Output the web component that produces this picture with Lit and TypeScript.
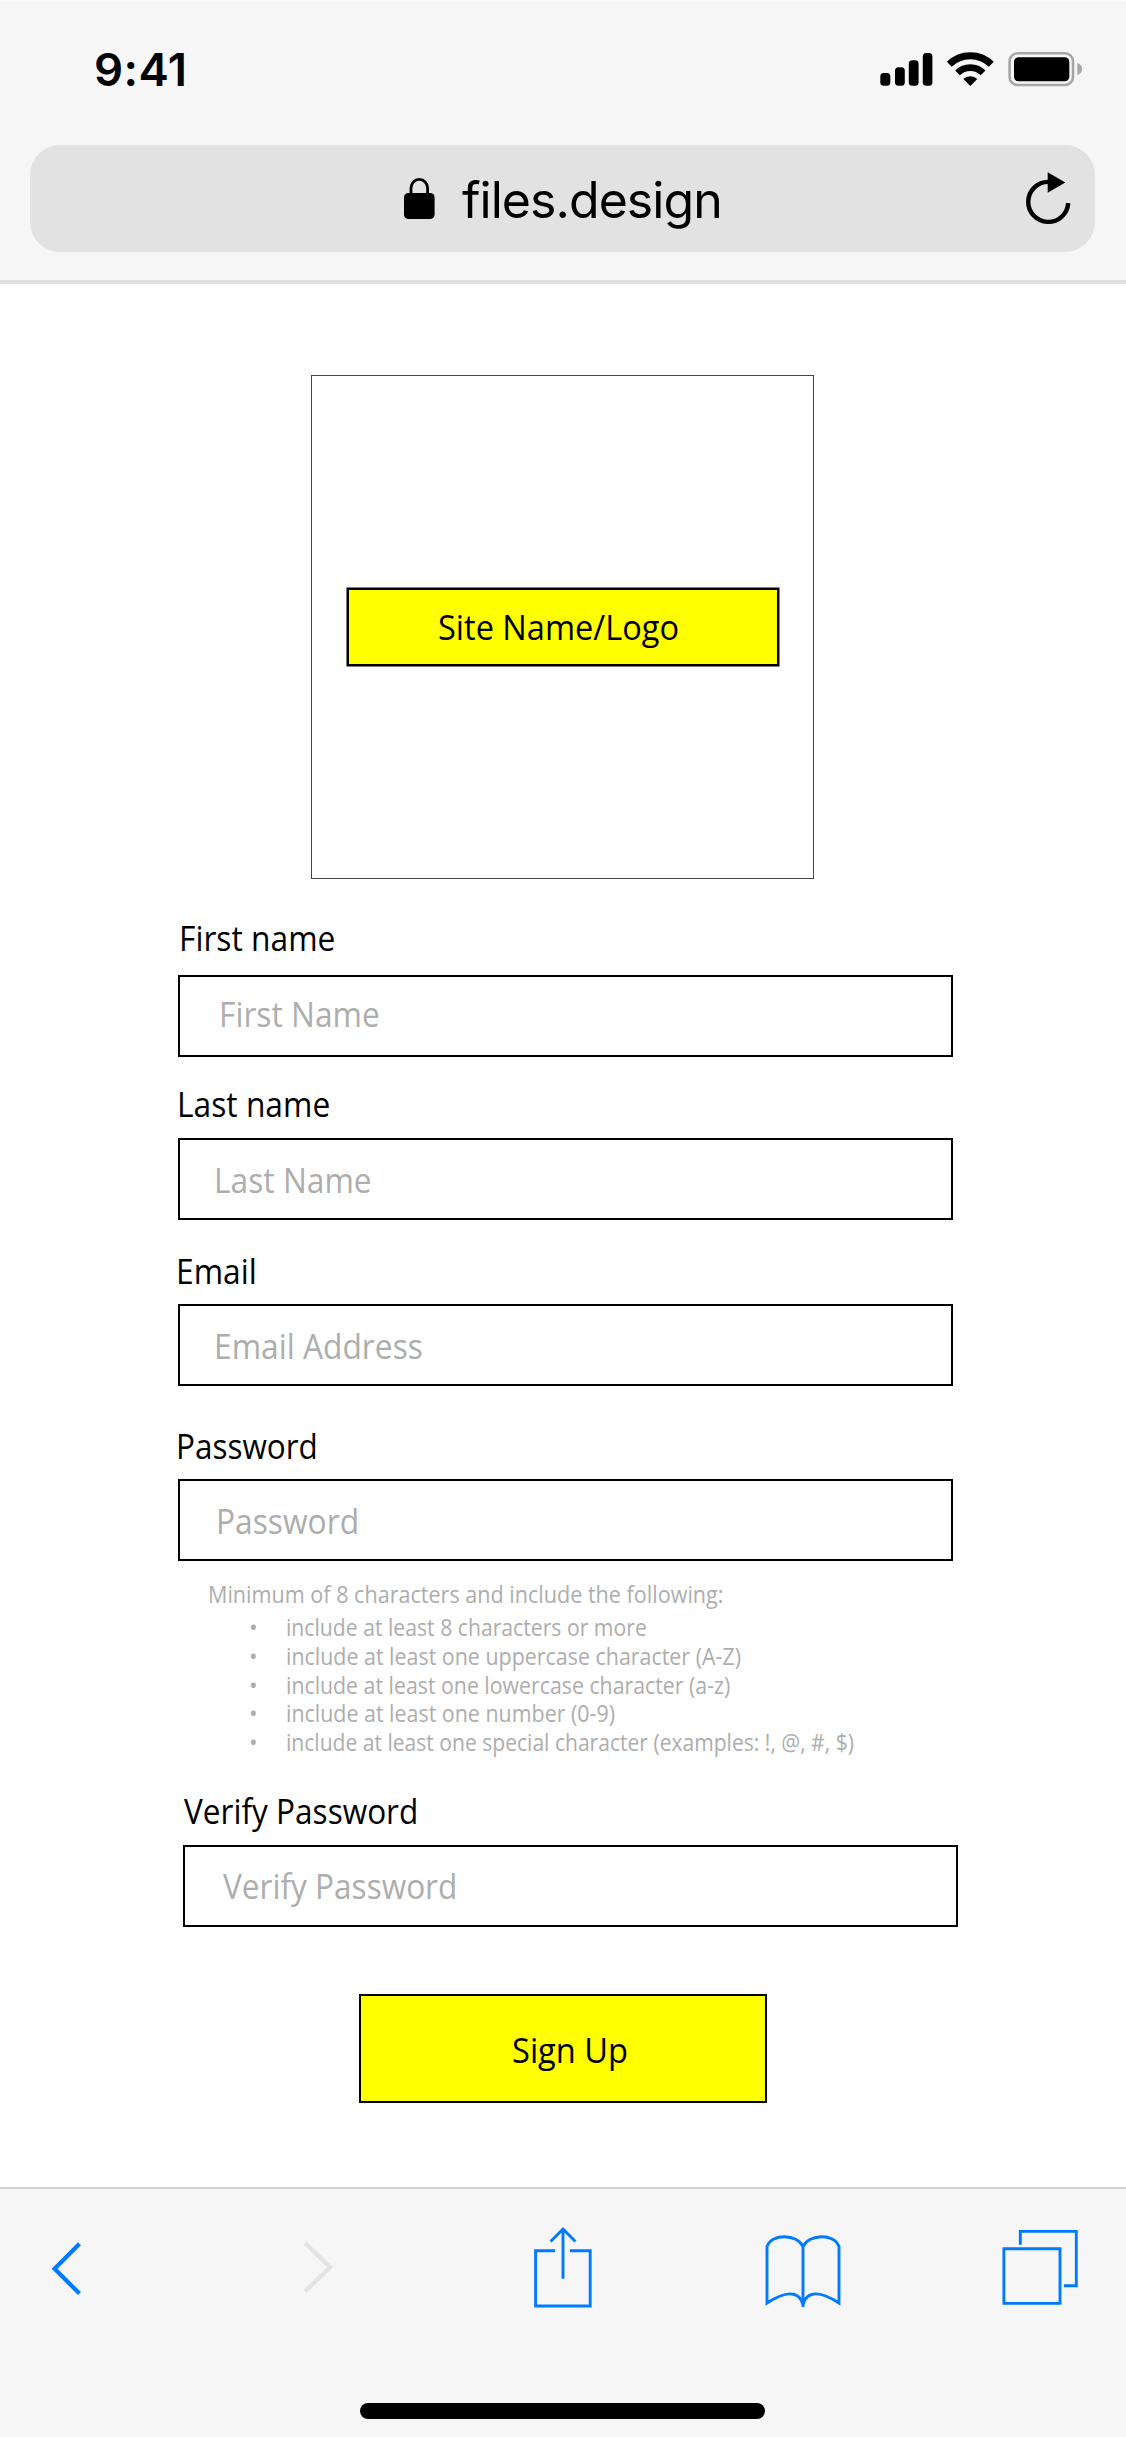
import { LitElement, html, css } from "lit";
import { customElement } from "lit/decorators.js";

interface Field { cls: string; label: string; placeholder: string; type: string; }

const FIELDS: Field[] = [
  { cls: "first", label: "First name", placeholder: "First Name", type: "text" },
  { cls: "last", label: "Last name", placeholder: "Last Name", type: "text" },
  { cls: "email", label: "Email", placeholder: "Email Address", type: "email" },
  { cls: "password", label: "Password", placeholder: "Password", type: "password" },
];

const VERIFY: Field = { cls: "verify", label: "Verify Password", placeholder: "Verify Password", type: "password" };

const RULES = [
  "include at least 8 characters or more",
  "include at least one uppercase character (A-Z)",
  "include at least one lowercase character (a-z)",
  "include at least one number (0-9)",
  "include at least one special character (examples: !, @, #, $)",
];

@customElement("app-root")
export class AppRoot extends LitElement {
  static styles = css`
    :host { display: block; }
    * { box-sizing: border-box; margin: 0; }
    .page { width: 1126px; height: 2437px; background: #fff; display: flex; flex-direction: column;
      font-family: "Open Sans", "Noto Sans", sans-serif; font-size: 34.5px; line-height: 40px; color: #000; overflow: hidden; }
    svg { display: block; flex: none; }

    .top { height: 284px; flex: none; background: #f6f6f6; border-top: 1px solid #fdfdfd; border-bottom: 4px solid #e0e0e0;
      font-family: Inter, "Liberation Sans", sans-serif; }
    .status { height: 144px; display: flex; justify-content: space-between; padding: 42px 44px 0 94px; }
    .time { font-size: 45.5px; font-weight: 600; line-height: 53px; letter-spacing: 0.4px; }
    .address { height: 107px; margin: 0 31px 0 30px; border-radius: 30px; background: #e2e2e2; display: flex; align-items: center; padding: 0 23px 0 373px; }
    .url { font-size: 50px; line-height: 60px; letter-spacing: -0.95px; margin-left: 26px; padding-top: 2px; }
    .reload { margin-left: auto; }

    main { height: 1903px; flex: none; display: flex; flex-direction: column; }
    .fit { display: inline-block; white-space: nowrap; transform: scaleX(0.92); transform-origin: left center; }
    .logo { width: 503px; height: 504px; margin: 91px 0 0 311px; border: 1px solid #444; display: flex; align-items: center; justify-content: center; }
    .name { width: 432px; height: 78px; background: #ff0; border: 2px solid #000; box-shadow: 0 0 0 0.5px #000; padding: 17px 0 0 89px; }
    .name .fit { transform: scaleX(0.943); }

    .field { display: flex; flex-direction: column; align-items: flex-start; margin-left: 178px; }
    label { display: block; height: 53px; margin-left: -2px; }
    .box { width: 775px; height: 82px; border: 2px solid #000; padding-left: 34px; display: flex; align-items: center; }
    input { width: 760px; height: 60px; flex: none; border: 0; padding: 0; background: transparent; outline: none; font: inherit; color: #000;
      transform: scaleX(0.92); transform-origin: left center; }
    input::placeholder { color: #adadad; opacity: 1; }
    .first { margin-top: 39px; }
    .first label { height: 57px; margin-left: 1px; }
    .first .box { padding: 0 0 5px 39px; }
    .last { margin-top: 27px; }
    .last label { height: 54px; margin-left: -1px; }
    .email { margin-top: 31px; }
    .password { margin-top: 40px; }
    .password label .fit { transform: scaleX(0.912); }
    .password .box { padding-left: 36px; }
    .verify { margin: 21px 0 0 183px; }
    .verify label { height: 54px; margin-left: 1px; }
    .verify label .fit { transform: scaleX(0.915); }
    .verify .box { padding: 0 0 2px 38px; }
    .verify input { transform: scaleX(0.915); }

    .hint { margin: 19px 0 0 208px; font-size: 23px; line-height: 28.75px; color: #adadad; height: 190px; }
    .hint p { height: 29px; }
    .hint p .fit { transform: scaleX(0.938); }
    ul { list-style: none; padding: 4px 0 0; }
    li { display: flex; }
    li::before { content: "•"; width: 37px; margin-left: 41px; }
    li .fit { transform: scaleX(0.926); }
    li:nth-child(1) .fit { transform: scaleX(0.921); }
    li:nth-child(2) .fit, li:nth-child(4) .fit { transform: scaleX(0.931); }
    li:last-child .fit { transform: scaleX(0.916); }

    button { width: 408px; height: 109px; margin: 67px 0 0 359px; background: #ff0; border: 2px solid #000; border-radius: 0; font: inherit; color: #000; text-align: left; padding: 2px 0 0 151px; }
    button .fit { transform: scaleX(0.945); }

    .bottom { height: 250px; flex: none; background: #f6f6f6; border-top: 2px solid #d1d1d1; display: flex; flex-direction: column; }
    .tools { display: flex; padding: 36px 0 0 50px; fill: none; stroke: #007aff; stroke-width: 2.9; }
    .chev { stroke-width: 4.2; }
    .off { stroke: #e3e3e3; margin-left: 218px; }
    .share { margin-left: 197px; }
    .book { margin-left: 172px; }
    .tabs { margin-left: 160px; }
    .home { width: 405px; height: 16px; border-radius: 8px; background: #000; margin: 88px 0 0 360px; }
  `;

  private field(f: Field) {
    return html`<div class="field ${f.cls}">
      <label for=${f.cls}><span class="fit">${f.label}</span></label>
      <div class="box"><input id=${f.cls} type=${f.type} placeholder=${f.placeholder}></div>
    </div>`;
  }

  render() {
    return html`<div class="page">
      <header class="top">
        <div class="status">
          <span class="time">9:41</span>
          <svg width="204" height="50" viewBox="878 43 204 50">
            <rect x="880.3" y="73" width="10" height="12.7" rx="3.5"/>
            <rect x="895" y="67.3" width="9.8" height="18.4" rx="3.5"/>
            <rect x="908.8" y="60.3" width="9.8" height="25.4" rx="3.5"/>
            <rect x="922.8" y="53" width="9.6" height="32.7" rx="3.5"/>
            <path d="M949.3 64.3A30.2 30.2 0 0 1 991.3 64.3" fill="none" stroke="#000" stroke-width="7"/>
            <path d="M957.5 72.9A18.3 18.3 0 0 1 983.1 72.9" fill="none" stroke="#000" stroke-width="6.8"/>
            <path d="M970.3 86L963.3 79A10 10 0 0 1 977.3 79Z"/>
            <rect x="1009.6" y="53.3" width="63.4" height="31.7" rx="8" fill="none" stroke="#a6a6a6" stroke-width="2.6"/>
            <rect x="1014" y="57.3" width="55.3" height="24" rx="4.5"/>
            <path d="M1077.3 62.7Q1082 64.7 1082 69T1077.3 75Z" fill="#a6a6a6"/>
          </svg>
        </div>
        <div class="address">
          <svg width="33" height="44" viewBox="0 0 33 44">
            <rect x="1" y="16" width="30.6" height="26" rx="4.5"/>
            <path d="M8 19V11a8.3 8.6 0 0 1 16.6 0v8" fill="none" stroke="#000" stroke-width="2.8"/>
          </svg>
          <span class="url">files.design</span>
          <svg class="reload" width="48" height="58" viewBox="1024 169.5 48 58">
            <path d="M1048.2 181.4A20 20 0 1 0 1068.2 202.7" fill="none" stroke="#000" stroke-width="4.4"/>
            <path d="M1047.7 171.7L1065.3 182L1047.7 192.2Z"/>
          </svg>
        </div>
      </header>
      <main>
        <div class="logo"><div class="name"><span class="fit">Site Name/Logo</span></div></div>
        ${FIELDS.map((f) => this.field(f))}
        <div class="hint">
          <p><span class="fit">Minimum of 8 characters and include the following:</span></p>
          <ul>${RULES.map((r) => html`<li><span class="fit">${r}</span></li>`)}</ul>
        </div>
        ${this.field(VERIFY)}
        <button><span class="fit">Sign Up</span></button>
      </main>
      <footer class="bottom">
        <div class="tools">
          <svg class="chev" width="34" height="90" viewBox="50 2225 34 90"><path d="M79.5 2243.8L54.6 2268.7L79.5 2293.6"/></svg>
          <svg class="chev off" width="34" height="90" viewBox="302 2225 34 90"><path d="M305 2243L330.3 2267.2L305 2291.4"/></svg>
          <svg class="share" width="60" height="90" viewBox="533 2225 60 90">
            <path d="M555 2250.8H535.6V2306H590.2V2250.8H570M563 2229V2278.7M550.6 2241.5L563 2229L575.4 2241.5"/>
          </svg>
          <svg class="book" width="76" height="90" viewBox="765 2225 76 90">
            <path d="M803 2246.5C797 2234 772 2233 767 2246.5V2303C784 2292 799 2289 803 2305C807 2289 822 2292 839 2303V2246.5C834 2233 809 2234 803 2246.5V2307"/>
          </svg>
          <svg class="tabs" width="78" height="90" viewBox="1001 2225 78 90">
            <path d="M1003.9 2248.8H1060V2303.4H1003.9ZM1020.3 2244.7V2231.4H1076.3V2285.8H1063.9"/>
          </svg>
        </div>
        <div class="home"></div>
      </footer>
    </div>`;
  }
}
